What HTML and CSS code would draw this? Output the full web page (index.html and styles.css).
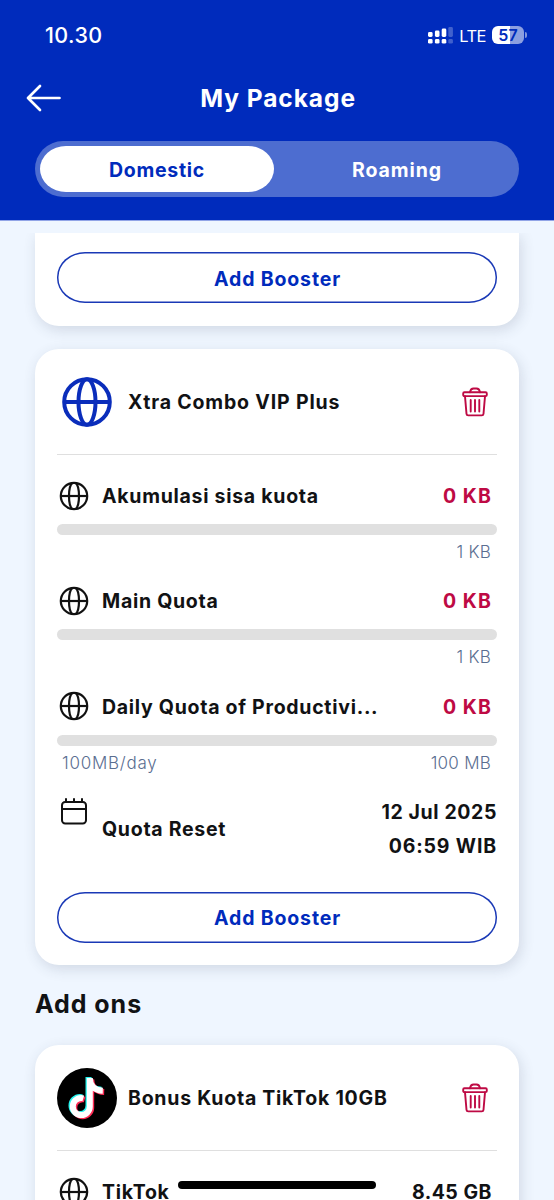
FILE: index.html
```html
<!DOCTYPE html>
<html lang="en">
<head>
<meta charset="utf-8">
<title>My Package</title>
<link rel="stylesheet" href="styles.css">
</head>
<body>
<svg class="defs" aria-hidden="true">
  <symbol id="globe" viewBox="0 0 30 30">
    <g fill="none" stroke="currentColor" stroke-width="2.200">
      <circle cx="15" cy="15" r="13.200"/>
      <path d="M1.800 15h26.400"/>
      <path d="M13.300 1.900C11 4 10 10 10 15s1 11 3.300 13.100M16.700 1.900C19 4 20 10 20 15s-1 11-3.300 13.100"/>
    </g>
  </symbol>
  <symbol id="globe-lg" viewBox="0 0 50 50">
    <g fill="none" stroke="currentColor" stroke-width="4">
      <circle cx="25" cy="25" r="22.800"/>
      <path d="M2 25h46"/>
      <ellipse cx="25" cy="25" rx="8.500" ry="22.800"/>
    </g>
  </symbol>
  <symbol id="trash" viewBox="0 0 26 30">
    <g fill="none" stroke="currentColor" stroke-width="1.900" stroke-linejoin="round" stroke-linecap="round">
      <path d="M8 5.200C8.500 2.600 9.800 1.500 11.500 1.500h3c1.700 0 3 1.100 3.500 3.700"/>
      <rect x="1.200" y="5.200" width="23.600" height="3.900" rx="1.200"/>
      <path d="M3 9.300l1.500 17.500c.1 1 .7 1.600 1.700 1.600h13.600c1 0 1.600-.6 1.700-1.600L23 9.300"/>
      <path d="M8.700 13v11.500M13 13v11.500M17.300 13v11.500"/>
    </g>
  </symbol>
</svg>
<div class="screen">
  <header class="header">
    <div class="status">
      <span class="clock">10.30</span>
      <div class="status-right">
        <svg class="signal" viewBox="0 0 25 18" fill="#fff">
          <rect x="0" y="5" width="4.600" height="5" rx="1.400"/><rect x="0" y="12" width="4.600" height="4.600" rx="1.400"/>
          <rect x="6.900" y="3.500" width="4.600" height="6.500" rx="1.400"/><rect x="6.900" y="12" width="4.600" height="4.600" rx="1.400"/>
          <rect x="13.700" y="1.500" width="4.600" height="8.500" rx="1.400"/><rect x="13.700" y="12" width="4.600" height="4.600" rx="1.400"/>
          <g opacity=".25"><rect x="20.300" y="0" width="4.600" height="10" rx="1.400"/><rect x="20.300" y="12" width="4.600" height="4.600" rx="1.400"/></g>
        </svg>
        <span class="network">LTE</span>
        <span class="battery">57</span><span class="battery-tip"></span>
      </div>
    </div>
    <div class="titlebar">
      <svg class="back" viewBox="0 0 36 28" fill="none" stroke="#fff" stroke-width="2.700" stroke-linecap="round" stroke-linejoin="round"><path d="M14 2L2 14l12 12M2 14h31.500"/></svg>
      <h1 class="title">My Package</h1>
    </div>
    <div class="tabs">
      <div class="tab tab-active"><span class="t-domestic">Domestic</span></div>
      <div class="tab"><span class="t-roaming">Roaming</span></div>
    </div>
  </header>
  <main class="scroller">
    <section class="card card-top">
      <div class="button"><span class="t-booster">Add Booster</span></div>
    </section>
    <section class="card card-main">
      <div class="card-head">
        <div class="brand"><svg class="brand-globe"><use href="#globe-lg"/></svg></div>
        <h2 class="name t-xtra">Xtra Combo VIP Plus</h2>
        <svg class="trash"><use href="#trash"/></svg>
      </div>
      <div class="quotas">
        <div class="quota">
          <div class="quota-row"><svg class="globe"><use href="#globe"/></svg><span class="label">Akumulasi sisa kuota</span><span class="amount">0 KB</span></div>
          <div class="bar"></div>
          <div class="limits"><span></span><span class="t-total">1 KB</span></div>
        </div>
        <div class="quota">
          <div class="quota-row"><svg class="globe"><use href="#globe"/></svg><span class="label">Main Quota</span><span class="amount">0 KB</span></div>
          <div class="bar"></div>
          <div class="limits"><span></span><span class="t-total">1 KB</span></div>
        </div>
        <div class="quota">
          <div class="quota-row"><svg class="globe"><use href="#globe"/></svg><span class="label">Daily Quota of Productivi...</span><span class="amount">0 KB</span></div>
          <div class="bar"></div>
          <div class="limits"><span class="t-perday">100MB/day</span><span class="t-total">100 MB</span></div>
        </div>
      </div>
      <div class="reset">
        <svg class="calendar" viewBox="0 0 26 27" fill="none" stroke="#111" stroke-width="2" stroke-linecap="round"><rect x="1" y="4" width="24" height="21.500" rx="3.200"/><path d="M1 11h24M5 1v3M13 1v3M21 1v3"/></svg>
        <span class="reset-label">Quota Reset</span>
        <div class="reset-date"><div class="t-date">12 Jul 2025</div><div class="t-time">06:59 WIB</div></div>
      </div>
      <div class="button"><span class="t-booster">Add Booster</span></div>
    </section>
    <h2 class="section-title">Add ons</h2>
    <section class="card card-addon">
      <div class="card-head">
        <div class="brand">
          <svg class="tiktok" viewBox="0 0 60 60">
            <circle cx="30" cy="30" r="30" fill="#000"/>
            <g fill="none" stroke-width="6">
              <g stroke="#25f4ee" transform="translate(-1.300 -1)"><path id="note" d="M32.800 10v28.500a8.500 8.500 0 1 1-8.500-8.500q1 0 2 .3M32.800 10c0 8 5.200 12.500 13 12.700"/></g>
              <use href="#note" stroke="#fe2c55" transform="translate(1.400 1.200)"/>
              <use href="#note" stroke="#fff"/>
            </g>
          </svg>
        </div>
        <h2 class="name t-bonus">Bonus Kuota TikTok 10GB</h2>
        <svg class="trash"><use href="#trash"/></svg>
      </div>
      <div class="quotas">
        <div class="quota-row"><svg class="globe"><use href="#globe"/></svg><span class="label">TikTok</span><span class="amount amount-dark">8.45 GB</span></div>
      </div>
    </section>
  </main>
  <div class="home-indicator"></div>
</div>
</body>
</html>
```

FILE: styles.css
```css
* { box-sizing: border-box; margin: 0; }
body {
  font-family: Inter, "Liberation Sans", sans-serif;
  font-size: 19.5px;
  font-weight: 700;
  letter-spacing: 0.72px;
  color: #111214;
  background: #eff6ff;
  white-space: nowrap;
}
svg { display: block; flex: none; }
.defs { display: none; }
.screen { position: relative; height: 1200px; overflow: hidden; background: #eff6ff; }

.header { height: 221px; background: #002bbc; border-bottom: 1px solid #91a4e7; color: #fff; }
.status { height: 70px; padding: 0 27px 0 45px; display: flex; align-items: center; justify-content: space-between; }
.clock { font-size: 21.5px; font-weight: 500; letter-spacing: 0.4px; }
.status-right { display: flex; align-items: center; }
.signal { width: 25px; height: 18px; margin-top: 1px; }
.network { margin: 2px 6px 0 6px; font-size: 16.5px; font-weight: 400; letter-spacing: -0.5px; }
.battery {
  width: 32px; height: 18px; border-radius: 6px; letter-spacing: 0;
  background: linear-gradient(90deg, #fff 57%, #8c9fe0 57%);
  color: #002bbc; font-size: 16px; font-weight: 600; line-height: 18px; text-align: center;
}
.battery-tip { width: 2px; height: 6px; margin-left: 1px; border-radius: 0 2px 2px 0; background: #8095dc; }
.titlebar { height: 56px; padding: 0 198px 0 26px; display: flex; align-items: center; justify-content: space-between; }
.back { width: 36px; height: 28px; }
.title { font-size: 24.5px; font-weight: 700; letter-spacing: 0.95px; }
.tabs { height: 56px; margin: 15px 35px 0; padding: 5px; border-radius: 28px; background: #4d6dd0; display: flex; }
.tab { flex: 1; display: flex; align-items: center; justify-content: center; padding-top: 2px; }
.tab-active { flex: 0 0 234px; border-radius: 26px / 23px; background: #fff; color: #002bbc; }
.t-domestic { letter-spacing: 0.7px; }
.t-roaming { letter-spacing: 0.9px; margin-left: 6px; }

.scroller { height: 967px; margin-top: 12px; overflow: hidden; }
.card { margin: 0 35px; padding: 0 22px; border-radius: 24px; background: #fff; box-shadow: 2px 4px 14px rgba(50, 60, 85, 0.16); }
.card-top { height: 93px; padding-top: 19px; border-radius: 0 0 24px 24px; }
.card-main { height: 616px; margin-top: 23px; }
.card-addon { height: 260px; }
.button {
  height: 51px; box-shadow: inset 0 0 0 1.5px #1a39b6; border-radius: 28px / 25px;
  display: flex; align-items: center; justify-content: center; padding-top: 2px; color: #002bbc;
}
.t-booster { letter-spacing: 0.85px; margin-right: -1px; }
.card-head { height: 106px; display: flex; align-items: center; border-bottom: 1px solid #dfdfdf; }
.brand { width: 60px; height: 60px; display: flex; align-items: center; justify-content: center; }
.brand-globe { width: 50px; height: 50px; color: #0a2dbb; }
.tiktok { width: 60px; height: 60px; }
.name { flex: 1; margin-left: 11px; padding-top: 1px; font-size: 19.5px; font-weight: 700; }
.t-xtra { letter-spacing: 0.83px; }
.t-bonus { letter-spacing: 0.75px; }
.trash { width: 26px; height: 30px; margin-right: 9.5px; color: #be0a44; }

.quotas { padding-top: 19px; }
.quota { height: 105.3px; }
.quota-row { height: 43px; display: flex; align-items: center; padding: 0 5px 0 2px; }
.globe { width: 30px; height: 30px; color: #111; }
.label { flex: 1; margin-left: 13px; padding-top: 1px; }
.amount { padding-top: 1px; letter-spacing: 1.1px; color: #be0a44; }
.amount-dark { color: #111214; letter-spacing: 0.5px; }
.bar { height: 11px; margin-top: 7px; border-radius: 6px; background: #e0e0e0; }
.limits { height: 34px; padding: 0 6px 0 5px; display: flex; align-items: center; justify-content: space-between; font-size: 17px; font-weight: 300; color: #5a6e91; }
.t-total { letter-spacing: 0.25px; }
.t-perday { letter-spacing: 0.75px; }

.reset { height: 73px; padding-top: 5px; margin-bottom: 28.7px; display: flex; }
.calendar { width: 26px; height: 27px; margin: 3px 0 0 4px; }
.reset-label { flex: 1; margin-left: 15px; line-height: 68px; }
.reset-date { text-align: right; line-height: 34px; }
.t-date { letter-spacing: 0.6px; }
.t-time { letter-spacing: 0.85px; }
.section-title { margin-left: 35px; height: 80px; line-height: 78px; font-size: 25px; font-weight: 700; letter-spacing: 0.95px; }
.home-indicator { position: absolute; left: 178px; top: 1181px; width: 198px; height: 8px; border-radius: 4px; background: #000; }
```
